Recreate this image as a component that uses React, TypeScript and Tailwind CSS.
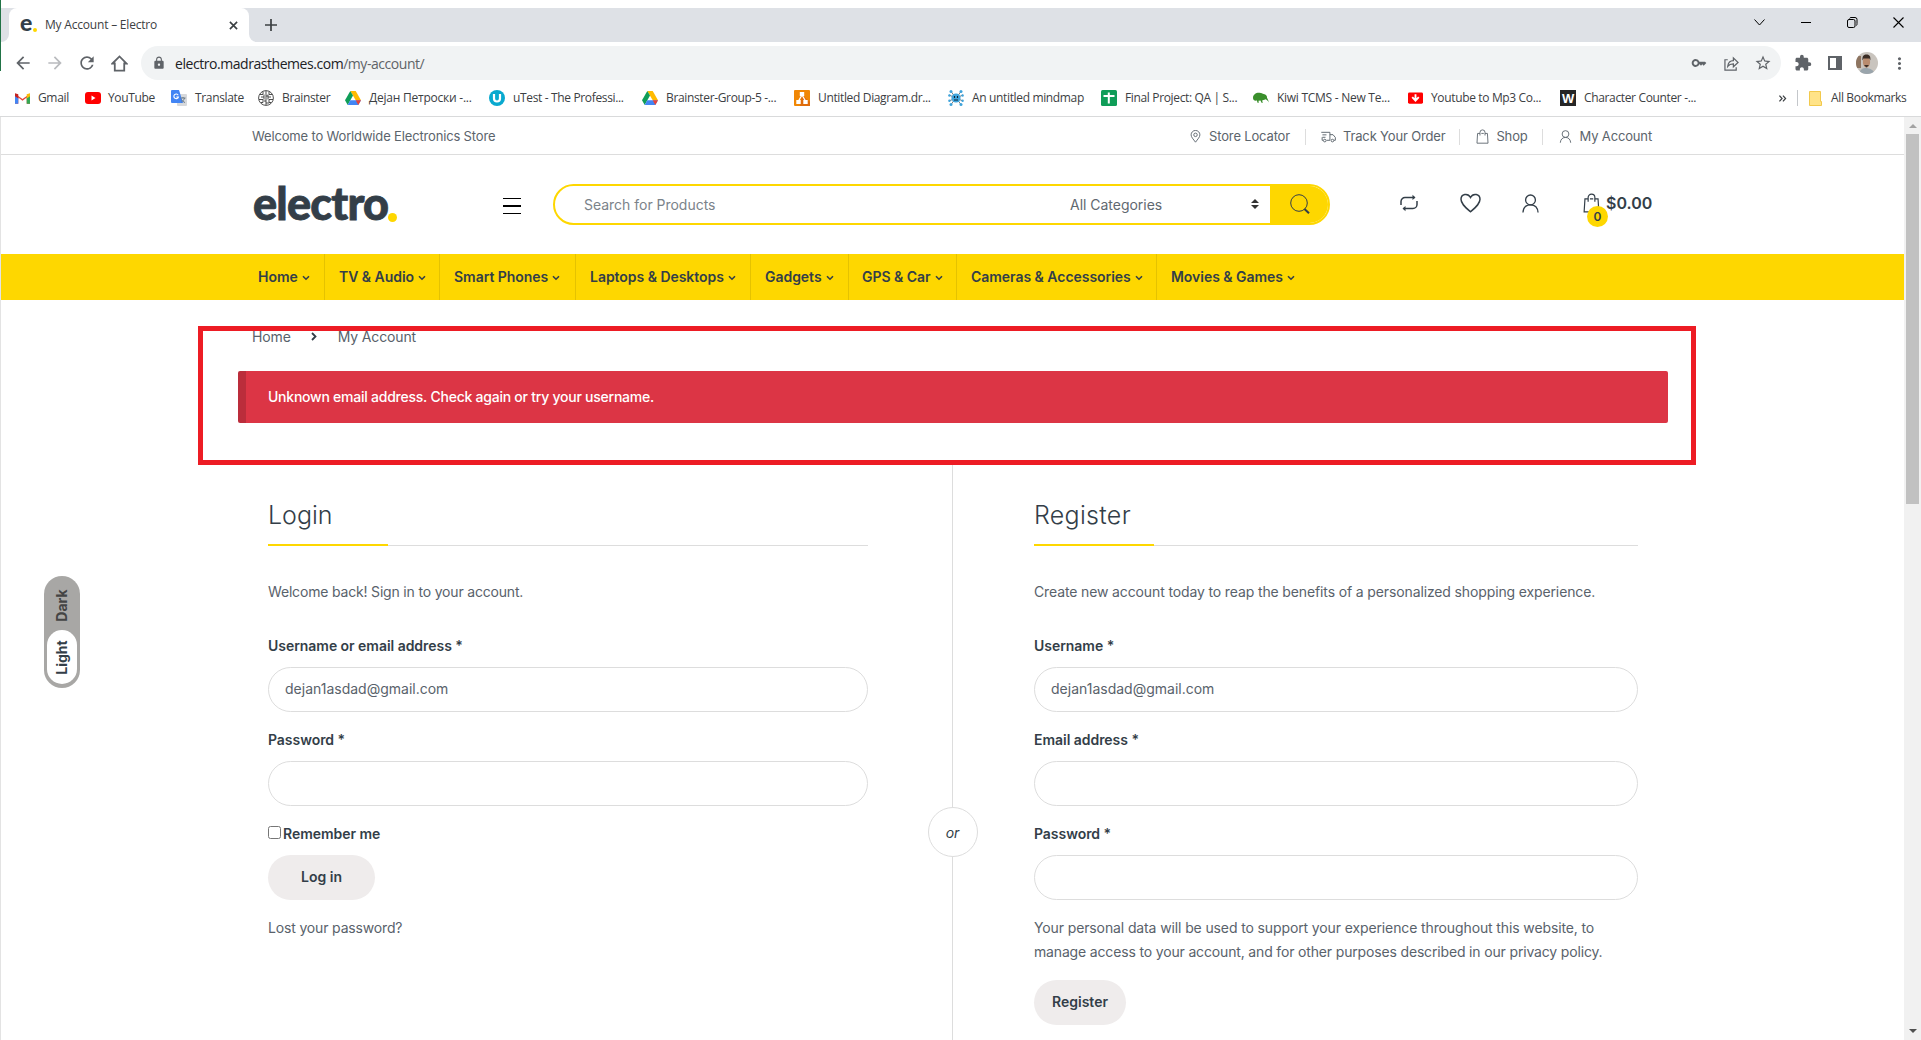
import React from "react";
import { MdKey, MdExtension, MdStarBorder, MdLock, MdArrowBack, MdArrowForward, MdRefresh, MdMoreVert } from "react-icons/md";

type IconProps = { className?: string };

const Chevron = ({ className = "" }: IconProps) => (
  <svg viewBox="0 0 8 6" className={className} fill="none" stroke="currentColor" strokeWidth="1.6">
    <path d="M1 1.2 4 4.2 7 1.2" />
  </svg>
);

const Bag = ({ className = "" }: IconProps) => (
  <svg viewBox="0 0 18 22" className={className} fill="none" stroke="currentColor" strokeWidth="1.3">
    <path d="M5.300 6.500H1.800L.9 20.800h16.200l-.9-14.300h-3.500M7.300 6.500h3.600" />
    <path d="M5.300 9.500V5a3.700 3.700 0 0 1 7.400 0v4.500" />
  </svg>
);

const User = ({ className = "" }: IconProps) => (
  <svg viewBox="0 0 18 20" className={className} fill="none" stroke="currentColor" strokeWidth="1.4">
    <circle cx="9" cy="6.2" r="5.2" />
    <path d="M1 19.6c.3-4.600 3-8.200 8-8.200s7.700 3.600 8 8.200" />
  </svg>
);

const Pin = () => (
  <svg viewBox="0 0 12 14" className="h-[13px] w-[11px]" fill="none" stroke="currentColor" strokeWidth="1">
    <path d="M6 13.200C3.500 9.800 1.200 7.600 1.200 5.200a4.800 4.800 0 0 1 9.600 0c0 2.400-2.300 4.600-4.800 8z" />
    <circle cx="6" cy="5.200" r="1.900" />
  </svg>
);

const Truck = () => (
  <svg viewBox="0 0 16 12" className="h-3 w-[15px]" fill="none" stroke="currentColor" strokeWidth="1">
    <path d="M.3 1h9.200v8.500H6M9.500 3.500h3.300l2.500 3v3h-1.500M1.500 3.700h4.300M1.500 6.300h3.300M1.200 6.300v3.200h1" />
    <circle cx="4" cy="9.800" r="1.400" />
    <circle cx="12.200" cy="9.800" r="1.400" />
  </svg>
);

const Drive = () => (
  <svg viewBox="0 0 16 14" className="h-[14px] w-4">
    <path d="M5.300 0h5.400L16 9.200h-5.300z" fill="#ffba00" />
    <path d="M5.300 0 8 4.600 2.700 14 0 9.200z" fill="#0f9d58" />
    <path d="M5.300 9.200H16L13.300 14H2.700z" fill="#4285f4" />
    <path d="m10.700 9.200 5.300 0L13.300 14z" fill="#ea4335" />
  </svg>
);

const bookmarkIcons: Record<string, React.ReactNode> = {
  gmail: (
    <svg viewBox="0 0 16 12" className="mr-px h-3 w-[15px]">
      <path d="M0 1.500V12h3.500V5.500L8 9l4.500-3.500V12H16V1.500L8 7z" fill="#ea4335" />
      <path d="M0 2v10h3.500V5z" fill="#4285f4" />
      <path d="M16 2v10h-3.500V5z" fill="#34a853" />
      <path d="M12.500 2 16 .8V4l-3.500 2.500z" fill="#fbbc04" />
      <path d="M0 .8 3.500 2V6.500L0 4z" fill="#c5221f" />
    </svg>
  ),
  youtube: (
    <svg viewBox="0 0 16 12" className="h-3 w-4">
      <rect width="16" height="12" rx="3" fill="#f00" />
      <path d="M6.500 3.500v5l4-2.500z" fill="#fff" />
    </svg>
  ),
  translate: (
    <svg viewBox="0 0 16 16" className="size-4">
      <rect x="6" y="4" width="10" height="12" rx="1" fill="#d7d9dc" />
      <path d="M1 0h7l4 13H1a1 1 0 0 1-1-1V1a1 1 0 0 1 1-1z" fill="#4285f4" />
      <path d="M7.200 5.200A2.300 2.300 0 1 0 7.400 7H5.300" fill="none" stroke="#fff" strokeWidth="1.100" />
      <path d="M9.500 8h5M12 7v1M13.500 8c-.5 2-2 3.500-3 4M10.500 9.500c.8 1.500 2 2.500 3.500 3" fill="none" stroke="#5f6f7d" strokeWidth=".9" />
    </svg>
  ),
  brain: (
    <svg viewBox="0 0 16 16" className="size-4" fill="none" stroke="#3b3b3b" strokeWidth=".9">
      <circle cx="8" cy="8" r="7.400" />
      <path d="M8 1v14M5 1.500v3H2M3 7h3V4.500M1 9.500h4v3M5 12.500H3M11 1.500v3h3M13 7h-3V4.500M15 9.500h-4v3M11 12.500h2M6 9.500V7M10 9.500V7M8 6h2M6 11h2M8 13h3" />
    </svg>
  ),
  drive: <Drive />,
  utest: (
    <svg viewBox="0 0 16 16" className="size-4">
      <circle cx="8" cy="8" r="8" fill="#09a9cf" />
      <path d="M5 4v4.500a3 3 0 0 0 6 0V4" fill="none" stroke="#fff" strokeWidth="2.200" />
    </svg>
  ),
  drawio: (
    <svg viewBox="0 0 16 16" className="size-4">
      <rect width="16" height="16" rx="1" fill="#f08705" />
      <path d="M8 5 16 12v4H6z" fill="#df6c0c" />
      <path d="M8 5 4.500 11M8 5l3.500 6" stroke="#fff" strokeWidth="1.300" />
      <path d="M5.800 2h4.400v4H5.800zM2.300 10h4.400v4H2.300zM9.300 10h4.400v4H9.300z" fill="#fff" />
    </svg>
  ),
  mindmap: (
    <svg viewBox="0 0 16 16" className="size-4">
      <path d="M8 8 3 1.500M8 8l5-6.500M8 8 1 5M8 8l7-3M8 8l-7 3M8 8l7 3M8 8l-5 6.500M8 8l5 6.500" stroke="#555" strokeWidth=".8" />
      <g fill="#3fa4dc">
        <circle cx="8" cy="8" r="4.600" />
        <circle cx="3" cy="1.500" r="1.500" /><circle cx="13" cy="1.500" r="1.500" />
        <circle cx="1.400" cy="5.500" r="1.200" /><circle cx="14.600" cy="5.500" r="1.200" />
        <circle cx="1.400" cy="10.800" r="1.200" /><circle cx="14.600" cy="10.800" r="1.200" />
        <circle cx="3" cy="14.500" r="1.500" /><circle cx="13" cy="14.500" r="1.500" />
      </g>
      <path d="M6.500 6v2M9.500 6v2M6 10h4" stroke="#123" strokeWidth="1.100" />
    </svg>
  ),
  sheets: (
    <svg viewBox="0 0 16 16" className="size-4">
      <rect width="16" height="16" rx="1.500" fill="#0f9d58" />
      <path d="M7.800 2.500v11M2.500 6h11" stroke="#fff" strokeWidth="2" />
    </svg>
  ),
  kiwi: (
    <svg viewBox="0 0 16 12" className="h-3 w-4">
      <path d="M0 6C0 2.500 3 .5 6.500.8c2 .1 3 1 4.200 1.200C13 2.300 14.500 4.500 14 6c.8 1 1.500 2.500 1.800 4.500-.8-1.800-2-2.800-3.200-3.300-1.500.8-3 .8-3.500 1.600l.8 2H8.500l-1-2.300-2 .2.300 2.100H4.500l-.6-2.300C1.500 9 0 8 0 6z" fill="#3a8f2c" />
    </svg>
  ),
  mp3: (
    <svg viewBox="0 0 16 12" className="mr-px h-3 w-[15px]">
      <rect width="16" height="12" rx="1.500" fill="#f00" />
      <path d="M8 2v6M4.500 5 8 8.800 11.500 5" fill="none" stroke="#fff" strokeWidth="2" />
    </svg>
  ),
  w: (
    <span className="flex size-4 items-center justify-center bg-[#262626] font-['Liberation_Sans'] text-[13px] font-bold leading-none text-white">W</span>
  ),
};

const bookmarks = [
  { icon: "gmail", text: "Gmail", w: "w-[70px] gap-[7px]" },
  { icon: "youtube", text: "YouTube", w: "w-[86px] gap-[7px]" },
  { icon: "translate", text: "Translate", w: "w-[87px] gap-2" },
  { icon: "brain", text: "Brainster", w: "w-[87px] gap-2" },
  { icon: "drive", text: "Дејан Петроски -...", w: "w-[144px] gap-2 tracking-[-0.23px]" },
  { icon: "utest", text: "uTest - The Professi...", w: "w-[153px] gap-2" },
  { icon: "drive", text: "Brainster-Group-5 -...", w: "w-[152px] gap-2" },
  { icon: "drawio", text: "Untitled Diagram.dr...", w: "w-[154px] gap-2" },
  { icon: "mindmap", text: "An untitled mindmap", w: "w-[153px] gap-2" },
  { icon: "sheets", text: "Final Project: QA | S...", w: "w-[152px] gap-2" },
  { icon: "kiwi", text: "Kiwi TCMS - New Te...", w: "w-[155px] gap-2 tracking-[-0.27px]" },
  { icon: "mp3", text: "Youtube to Mp3 Co...", w: "w-[152px] gap-[7px]" },
  { icon: "w", text: "Character Counter -...", w: "w-[217px] gap-2" },
];

function BrowserChrome() {
  return (
    <div className="shrink-0 border-b border-[#d9dadb] bg-white font-['Open_Sans','Noto_Sans',sans-serif] text-[12px] text-[#3c4043]">
      <div className="mt-2 flex h-[34px] bg-[#dee1e6]">
        <div className="w-[9px] bg-white"><div className="h-full rounded-br-lg bg-[#dee1e6]" /></div>
        <div className="flex w-[240px] items-center rounded-t-lg bg-white pl-[11px] pr-[11px]">
          <span className="mt-[-5px] w-[12px] font-['Lato'] text-[23px] font-black leading-none text-[#333e48]">e</span>
          <span className="ml-[1px] mt-[9px] size-[4px] rounded-full bg-[#fed700]" />
          <span className="ml-[8px] whitespace-nowrap tracking-[-0.2px]">My Account – Electro</span>
          <svg viewBox="0 0 10 10" className="ml-auto size-[9px]" stroke="#3c4043" strokeWidth="1.800"><path d="M1 1l8 8M9 1 1 9" /></svg>
        </div>
        <div className="w-2 bg-white"><div className="h-full rounded-bl-lg bg-[#dee1e6]" /></div>
        <svg viewBox="0 0 14 14" className="ml-[8px] mt-[11px] size-[12px]" stroke="#3c4043" strokeWidth="2"><path d="M7 0v14M0 7h14" /></svg>
        <div className="ml-auto flex h-[28px] items-center pr-[17px] text-black">
          <svg viewBox="0 0 11 7" className="mr-[36px] h-[7px] w-[11px]" fill="none" stroke="currentColor"><path d="M.5.5l5 5.500 5-5.500" /></svg>
          <div className="mr-[36px] h-px w-[10px] bg-black" />
          <svg viewBox="0 0 11 11" className="mr-[35px] size-[11px]" fill="none" stroke="currentColor"><rect x=".5" y="2.500" width="7.500" height="8" rx="1.500" /><path d="M2.500 1.500Q3 .5 4 .5h4Q10 .5 10 2.500v4Q10 8 9.500 8.500" /></svg>
          <svg viewBox="0 0 11 11" className="size-[11px]" stroke="currentColor" strokeWidth="1.100"><path d="M.5.5l10 10M10.500.5l-10 10" /></svg>
        </div>
      </div>
      <div className="flex h-[42px] items-center pl-[13px] text-[#5f6368]">
        <MdArrowBack className="size-5" />
        <MdArrowForward className="ml-[12px] size-5 text-[#b9bbbe]" />
        <MdRefresh className="ml-[12px] size-5" />
        <svg viewBox="0 0 18 18" className="ml-[14px] size-[17px]" fill="none" stroke="currentColor" strokeWidth="1.900"><path d="M1.500 9 9 1.500 16.500 9H14v7.500H4V9z" /></svg>
        <div className="ml-[13px] flex h-[34px] w-[1640px] items-center rounded-full bg-[#f1f3f4] pl-[11px] pr-[9px]">
          <MdLock className="size-[14px]" />
          <span className="ml-[9px] text-[14px] tracking-[-0.45px] text-[#5f6368]"><span className="text-[#202124]">electro.madrasthemes.com</span>/my-account/</span>
          <MdKey className="ml-auto size-4" />
          <svg viewBox="0 0 16 16" className="ml-[17px] size-[15px]" fill="none" stroke="currentColor" strokeWidth="1.300"><path d="M4 4H1v11h12v-3M4 11c.5-4 3-6 6-6V2l5 5-5 4.500V8.500C7 8.500 5.500 9 4 11z" /></svg>
          <MdStarBorder className="ml-[15px] size-[18px]" />
        </div>
        <MdExtension className="ml-[13px] size-[18px]" />
        <svg viewBox="0 0 14 14" className="ml-[16px] size-[14px]"><path d="M0 0h14v14H0z" fill="currentColor" /><path d="M2 2h6v10H2z" fill="#fff" /></svg>
        <svg viewBox="0 0 22 22" className="ml-[14px] size-[22px]">
          <clipPath id="avatar"><circle cx="11" cy="11" r="11" /></clipPath>
          <g clipPath="url(#avatar)">
            <path d="M0 0h22v22H0z" fill="#c9c4be" />
            <path d="M0 4h5v12H0z" fill="#8d7460" />
            <path d="M3 22c1-5 4-6 7-6s8 2 9 6z" fill="#9aa5ac" />
            <ellipse cx="10.500" cy="10" rx="3.600" ry="5.500" fill="#b98c6f" />
            <path d="M6.500 8.500C6 4 8 2.500 10.500 2.500S15 4 14.300 8.500L13.500 6.500h-6zM8 13h5l-2.500 2.500z" fill="#3a2c25" />
          </g>
        </svg>
        <MdMoreVert className="ml-[12px] size-[19px]" />
      </div>
      <div className="flex h-[32px] items-center pb-[4px] pl-[15px] tracking-[-0.35px]">
        {bookmarks.map((b) => (
          <div key={b.text} className={`flex shrink-0 items-center whitespace-nowrap ${b.w}`}>
            <span className="flex w-4 shrink-0 justify-center">{bookmarkIcons[b.icon]}</span>
            <span>{b.text}</span>
          </div>
        ))}
        <svg viewBox="0 0 9 8" className="ml-px h-[7px] w-[9px]" fill="none" stroke="currentColor" strokeWidth="1.400"><path d="M1 .8 4 4 1 7.200M5 .8 8 4 5 7.200" /></svg>
        <div className="ml-[10px] h-4 w-px bg-[#c4c7cb]" />
        <svg viewBox="0 0 13 15" className="ml-[11px] h-[15px] w-[13px]"><path d="M.5.500h11v10h1v4H.5z" fill="#ffe388" stroke="#f2c94c" /></svg>
        <span className="ml-[9px] whitespace-nowrap">All Bookmarks</span>
      </div>
    </div>
  );
}

function TopBar() {
  const sep = <span className="h-4 w-px bg-[#dddddd]" />;
  return (
    <div className="flex h-[38px] items-center border-b border-[#dddddd] pl-[251px] pr-[252px] pt-[2px] text-[13px] tracking-[-0.16px] text-[#5b646c]">
      <span>Welcome to Worldwide Electronics Store</span>
      <div className="ml-auto flex items-center">
        <Pin /><span className="ml-[8px] mr-[15px]">Store Locator</span>{sep}
        <span className="ml-[15px] flex items-center"><Truck /></span><span className="ml-[7px] mr-[14px]">Track Your Order</span>{sep}
        <Bag className="ml-4 h-[15px] w-[13px]" /><span className="ml-[7px] mr-[14px]">Shop</span>{sep}
        <User className="ml-4 h-[13px] w-[13px]" /><span className="ml-[8px]">My Account</span>
      </div>
    </div>
  );
}

function Header() {
  return (
    <div className="flex h-[99px] items-center pb-[1px] pl-[252px] text-[#333e48]">
      <div className="flex h-[41px] w-[250px] items-center">
        <span className="mt-[-2px] font-['Lato'] text-[45px] font-black leading-none tracking-[-0.8px] [-webkit-text-stroke:0.8px_#333e48]">electro</span>
        <span className="mt-[27px] size-[9px] rounded-full bg-[#fed700]" />
      </div>
      <div className="mt-[4px] flex w-[50px] flex-col gap-[6px]">
        <span className="h-[1.500px] w-[18px] bg-black" />
        <span className="h-[1.500px] w-[18px] bg-black" />
        <span className="h-[1.500px] w-[18px] bg-black" />
      </div>
      <div className="flex h-[41px] w-[777px] overflow-hidden rounded-full border-2 border-[#fed700] bg-white text-[14px] tracking-[-0.02px]">
        <span className="flex w-[515px] items-center pl-[29px] text-[#7b838a]">Search for Products</span>
        <span className="flex w-[200px] items-center text-[#5f6870]">All Categories
          <svg viewBox="0 0 8 10" className="ml-auto mr-[11px] h-[10px] w-2"><path d="M4 0 8 4H0zM4 10 0 6h8z" fill="#333" /></svg>
        </span>
        <span className="flex grow items-center bg-[#fed700] pl-[20px]">
          <svg viewBox="0 0 20 20" className="size-5" fill="none" stroke="#333e48"><circle cx="9" cy="9" r="8.300" strokeWidth="1" /><path d="m14.500 15 4.500 4.300" strokeWidth="2" /></svg>
        </span>
      </div>
      <div className="mb-[2px] flex items-center">
        <svg viewBox="0 0 18 18" className="ml-[70px] h-[18px] w-[18px]" fill="none" stroke="currentColor" strokeWidth="1.500">
          <path d="M1 11V7.500a4 4 0 0 1 4-4h9.500M17 7v3.500a4 4 0 0 1-4 4H3.500" /><path d="M12.500.800 15.500 3.500 12.500 6zM5.500 12 2.500 14.500l3 2.700z" fill="currentColor" stroke="none" />
        </svg>
        <svg viewBox="0 0 21 20" className="ml-[42px] h-[20px] w-[21px]" fill="none" stroke="currentColor" strokeWidth="1.500">
          <path d="M10.500 18.800C5.500 14.500 1 11 1 6.300 1 1 7.800-.5 10.500 4.500 13.200-.5 20 1 20 6.300c0 4.700-4.500 8.200-9.500 12.500z" />
        </svg>
        <User className="ml-[41px] h-[19px] w-[17px]" />
        <div className="relative ml-[44px] flex items-center">
          <Bag className="h-[20px] w-[17px]" />
          <span className="absolute left-[4px] top-[15px] flex size-[21px] items-center justify-center rounded-full bg-[#fed700] text-[12px] font-semibold">0</span>
          <span className="ml-[6px] text-[16px] font-semibold">$0.00</span>
        </div>
      </div>
    </div>
  );
}

const navItems = [
  { text: "Home", w: "w-[72px] pl-[5px]" },
  { text: "TV & Audio", w: "w-[115px] pl-[14px]" },
  { text: "Smart Phones", w: "w-[136px] pl-[14px]" },
  { text: "Laptops & Desktops", w: "w-[175px] pl-[14px]" },
  { text: "Gadgets", w: "w-[98px] pl-[14px]" },
  { text: "GPS & Car", w: "w-[108px] pl-[13px]" },
  { text: "Cameras & Accessories", w: "w-[200px] pl-[14px]" },
  { text: "Movies & Games", w: "w-[155px] pl-[14px]" },
];

function Nav() {
  return (
    <div className="flex h-[46px] bg-[#fed700] pl-[252px] text-[14px] font-semibold tracking-[-0.04px] text-[#333e48]">
      {navItems.map((n, i) => (
        <div key={n.text} className={`flex items-center whitespace-nowrap pb-[2px] ${n.w} ${i < 7 ? "border-r border-[#e5c200]" : ""}`}>
          {n.text}
          <Chevron className="ml-[4px] mt-[4px] h-[6px] w-[8px]" />
        </div>
      ))}
    </div>
  );
}

const Heading = ({ children, className = "" }: { children: React.ReactNode; className?: string }) => (
  <h2 className={`flex h-[59px] items-start border-b border-[#dddddd] text-[25px] leading-[56px] ${className}`}>
    <span className="box-content h-[57px] w-[120px] border-b-2 border-[#fed700] font-light">{children}</span>
  </h2>
);

const Field = ({ label, value = "" }: { label: string; value?: string }) => (
  <label className="mb-[21px] block">
    <span className="block h-[28px] text-[14px] font-semibold leading-[14px] tracking-[-0.04px]">{label} *</span>
    <span className="flex h-[45px] items-center rounded-full border border-[#dddddd] px-4 pb-[2px] text-[14px] text-[#59626b]">{value}</span>
  </label>
);

function Forms() {
  return (
    <div className="flex grow pl-[267px] text-[14px] text-[#333e48]">
      <div className="w-[600px] pt-[22px]">
        <Heading>Login</Heading>
        <p className="mb-[38px] mt-[37px] leading-[18px] tracking-[-0.18px] text-[#59626b]">Welcome back! Sign in to your account.</p>
        <Field label="Username or email address" value="dejan1asdad@gmail.com" />
        <Field label="Password" />
        <div className="flex h-[28px] items-start font-semibold leading-[14px] tracking-[-0.04px]">
          <span className="mr-[2px] mt-[-1px] size-[13px] rounded-[2.500px] border border-[#767676] bg-white" />Remember me
        </div>
        <div className="flex h-[45px] w-[107px] items-center justify-center rounded-full bg-[#efecec] pb-[2px] font-semibold">Log in</div>
        <p className="mt-[16px] leading-6 tracking-[-0.16px] text-[#59626b]">Lost your password?</p>
      </div>
      <div className="flex w-[166px] flex-col items-center pl-[3px]">
        <div className="h-[342px] w-px bg-[#dddddd]" />
        <div className="flex size-[50px] shrink-0 items-center justify-center rounded-full border border-[#dddddd] pt-[1px] italic">or</div>
        <div className="w-px grow bg-[#dddddd]" />
      </div>
      <div className="w-[604px] pt-[22px]">
        <Heading className="tracking-[0.3px]">Register</Heading>
        <p className="mb-[38px] mt-[37px] leading-[18px] tracking-[-0.13px] text-[#59626b]">Create new account today to reap the benefits of a personalized shopping experience.</p>
        <Field label="Username" value="dejan1asdad@gmail.com" />
        <Field label="Email address" />
        <Field label="Password" />
        <p className="mt-[-5px] leading-6 tracking-[-0.12px] text-[#59626b]">Your personal data will be used to support your experience throughout this website, to<br /><span className="tracking-[-0.16px]">manage access to your account, and for other purposes described in our privacy policy.</span></p>
        <div className="mt-4 flex h-[45px] w-[92px] items-center justify-center rounded-full bg-[#efecec] pb-[2px] font-semibold">Register</div>
      </div>
    </div>
  );
}

export default function App() {
  return (
    <div className="relative flex h-[1040px] w-[1921px] flex-col overflow-hidden bg-white font-['Inter',sans-serif]">
      <BrowserChrome />
      <div className="flex min-h-0 grow">
        <div className="w-px bg-[#e3e3e3]" />
        <div className="flex w-[1903px] flex-col">
          <TopBar />
          <Header />
          <Nav />
          <div className="relative mx-[197px] mt-[26px] h-[139px] w-[1498px] shrink-0 border-[5px] border-[#ed1c24] pl-[35px]">
            <div className="flex h-[40px] items-start pl-[14px] text-[14px] leading-[11px] tracking-[-0.14px] text-[#59626b]">
              <span>Home</span>
              <svg viewBox="0 0 6 9" className="ml-[20px] mr-[21px] mt-[1px] h-[9px] w-[6px]" fill="none" stroke="#333e48" strokeWidth="1.800"><path d="M1 1l3.500 3.500L1 8" /></svg>
              <span>My Account</span>
            </div>
            <div className="flex h-[52px] w-[1430px] items-center rounded-[2px] border-l-8 border-[#bb2d3b] bg-[#dc3545] pb-[2px] pl-[22px] text-[14px] font-medium tracking-[-0.24px] text-white">
              Unknown email address. Check again or try your username.
            </div>
          </div>
          <Forms />
        </div>
        <div className="flex w-[17px] flex-col items-center bg-[#f1f1f1]">
          <svg viewBox="0 0 8 4" className="mt-[7px] h-1 w-2"><path d="M4 0 8 4H0z" fill="#a3a3a3" /></svg>
          <div className="mt-[6px] h-[370px] w-[13px] bg-[#c1c1c1]" />
          <svg viewBox="0 0 8 4" className="mb-[7px] mt-auto h-1 w-2"><path d="M0 0h8L4 4z" fill="#505050" /></svg>
        </div>
      </div>
      <div className="absolute left-0 top-0 h-[71px] w-px bg-[#217346]" />
      <div className="absolute left-[44px] top-[576px] flex h-[112px] w-9 flex-col rounded-full bg-[#a8a7a5] p-[3px] text-[14px] font-bold text-[#333e48]">
        <span className="flex h-[51px] w-[30px] items-center justify-center pr-px pt-[1px] text-[#444]"><span className="-rotate-90">Dark</span></span>
        <span className="flex h-[54px] w-[30px] items-center justify-center rounded-full bg-white pr-px"><span className="-rotate-90">Light</span></span>
      </div>
    </div>
  );
}
